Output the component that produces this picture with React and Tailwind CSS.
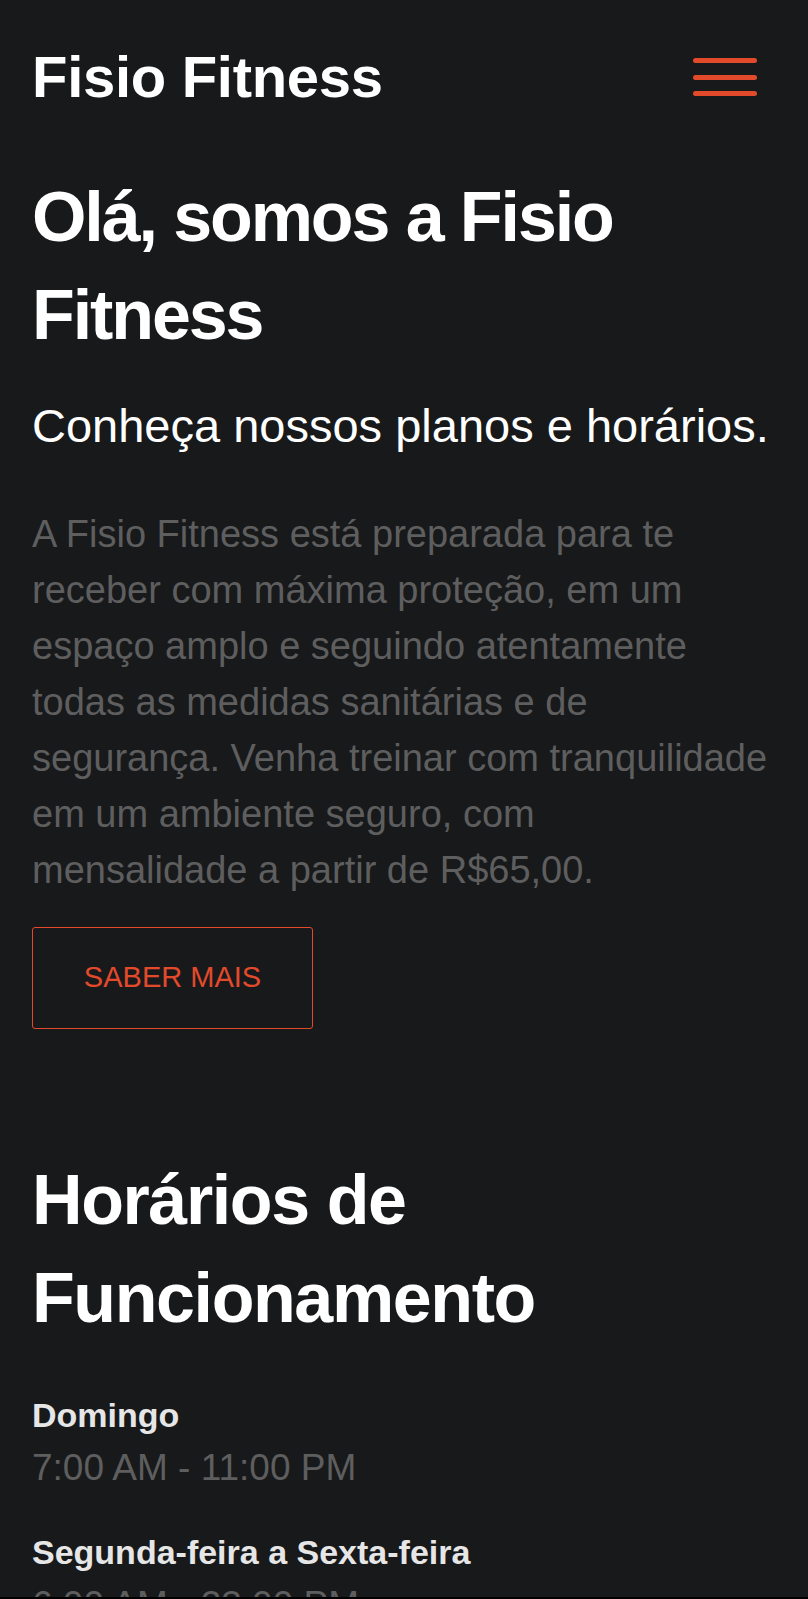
export default function App() {
  const font = { fontFamily: '"Liberation Sans", Arial, sans-serif' };

  const horarios = [
    { dia: 'Domingo', hora: '7:00 AM - 11:00 PM' },
    { dia: 'Segunda-feira a Sexta-feira', hora: '6:00 AM - 23:00 PM' },
  ];

  return (
    <div className="min-h-screen bg-[#18191b] text-white px-8" style={font}>
      <header className="flex items-center justify-between pt-[45px]">
        <h2 className="text-[58px] font-bold leading-[64px] tracking-[-0.005em]">Fisio Fitness</h2>
        <button className="mr-[19px] flex flex-col gap-[11.5px]" aria-label="Menu">
          <span className="block w-16 h-[5px] rounded-full bg-[#e24a2b]" />
          <span className="block w-16 h-[5px] rounded-full bg-[#e24a2b]" />
          <span className="block w-16 h-[5px] rounded-full bg-[#e24a2b]" />
        </button>
      </header>

      <section className="mt-[59px]">
        <h1 className="text-[70px] font-bold leading-[98px] tracking-[-0.03em]">
          Olá, somos a Fisio Fitness
        </h1>
        <p className="mt-[34px] text-[47px] leading-[55px]">Conheça nossos planos e horários.</p>
        <p className="mt-[53px] text-[38px] leading-[56px] text-[#5e5e5f]">
          A Fisio Fitness está preparada para te<br />
          receber com máxima proteção, em um<br />
          espaço amplo e seguindo atentamente<br />
          todas as medidas sanitárias e de<br />
          segurança. Venha treinar com tranquilidade<br />
          em um ambiente seguro, com<br />
          mensalidade a partir de R$65,00.
        </p>
        <button className="mt-[29px] w-[281px] h-[102px] flex items-center justify-center border border-[#e24a2b] rounded-[3px] text-[29px] text-[#e24a2b]">
          SABER MAIS
        </button>
      </section>

      <section className="mt-[122px] pb-10">
        <h1 className="text-[70px] font-bold leading-[98px] tracking-[-0.02em]">
          Horários de Funcionamento
        </h1>
        <div className="mt-[48px] flex flex-col gap-[42px]">
          {horarios.map((h) => (
            <div key={h.dia} className="flex flex-col gap-[11px]">
              <p className="text-[34px] font-bold leading-[40px] text-[#e6e6e6]">{h.dia}</p>
              <p className="text-[37px] leading-[44px] text-[#5e5e5f]">{h.hora}</p>
            </div>
          ))}
        </div>
      </section>

      <div className="fixed bottom-0 left-0 right-0 h-[2px] bg-black" />
    </div>
  );
}
